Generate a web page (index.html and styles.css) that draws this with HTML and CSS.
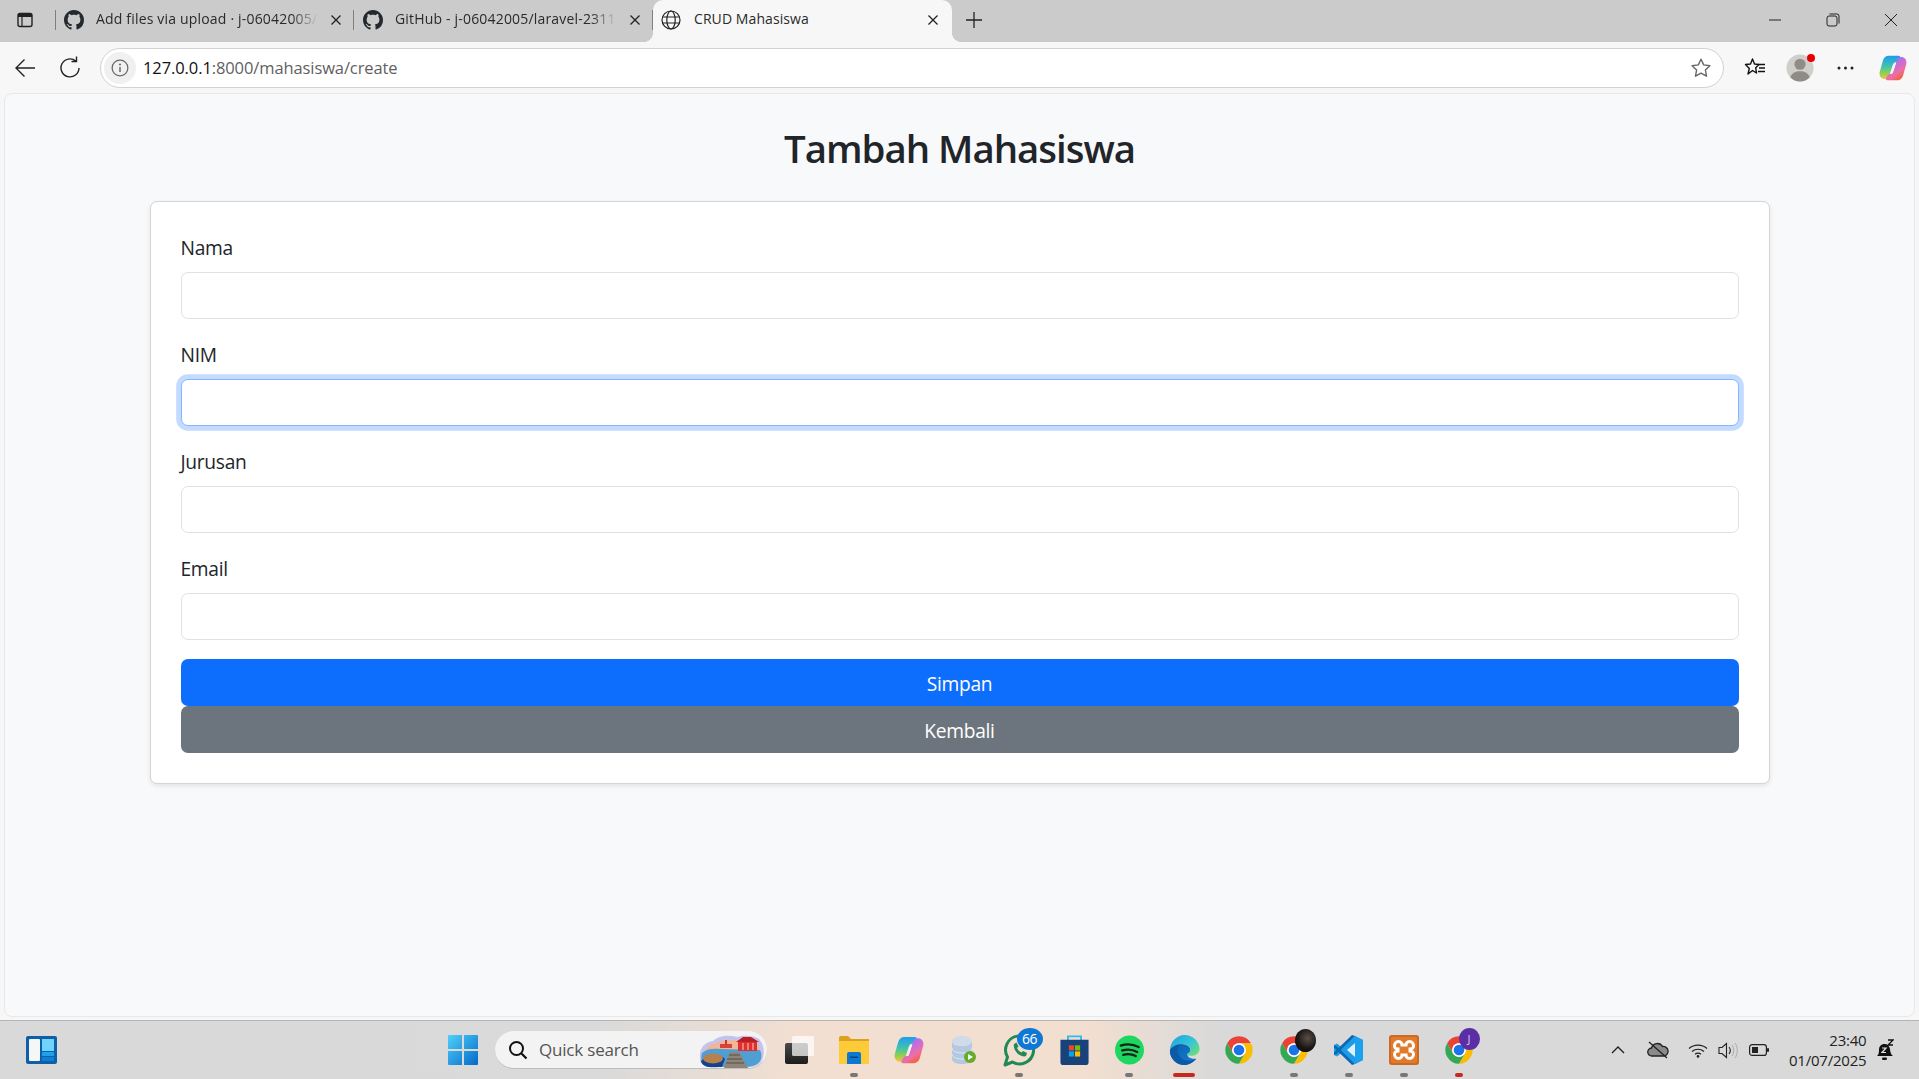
FILE: index.html
```
<!DOCTYPE html>
<html lang="id">
<head>
<meta charset="utf-8">
<title>CRUD Mahasiswa</title>
<link rel="stylesheet" href="styles.css">
</head>
<body>
<svg class="defs" width="0" height="0" aria-hidden="true">
  <symbol id="gh" viewBox="0 0 16 16"><path fill="#24292f" d="M8 0C3.58 0 0 3.58 0 8c0 3.54 2.29 6.53 5.47 7.59.4.07.55-.17.55-.38 0-.19-.01-.82-.01-1.49-2.01.37-2.53-.49-2.69-.94-.09-.23-.48-.94-.82-1.13-.28-.15-.68-.52-.01-.53.63-.01 1.08.58 1.23.82.72 1.21 1.87.87 2.33.66.07-.52.28-.87.51-1.07-1.78-.2-3.64-.89-3.64-3.95 0-.87.31-1.59.82-2.15-.08-.2-.36-1.02.08-2.12 0 0 .67-.21 2.2.82.64-.18 1.32-.27 2-.27s1.36.09 2 .27c1.53-1.04 2.2-.82 2.2-.82.44 1.1.16 1.92.08 2.12.51.56.82 1.27.82 2.15 0 3.07-1.87 3.75-3.65 3.95.29.25.54.73.54 1.48 0 1.07-.01 1.93-.01 2.2 0 .21.15.46.55.38A8.013 8.013 0 0 0 16 8c0-4.42-3.58-8-8-8z"/></symbol>
  <symbol id="x" viewBox="0 0 12 12"><path d="M1.500 1.500l9 9M10.500 1.500l-9 9" stroke="#222" stroke-width="1.300" fill="none"/></symbol>
  <symbol id="chrome" viewBox="0 0 48 48">
    <path fill="#ea4335" d="M24 2A22 22 0 0 0 5 13l9.500 16.500A11 11 0 0 1 24 13h19A22 22 0 0 0 24 2z"/>
    <path fill="#fbbc04" d="M43 13H24a11 11 0 0 1 9.500 16.500L24 46A22 22 0 0 0 43 13z"/>
    <path fill="#34a853" d="M5 13a22 22 0 0 0 19 33l9.500-16.500a11 11 0 0 1-19 0z"/>
    <circle cx="24" cy="24" r="11" fill="#fff"/><circle cx="24" cy="24" r="8.500" fill="#1a73e8"/>
  </symbol>
  <symbol id="copilot" viewBox="0 0 32 32">
    <defs>
      <linearGradient id="cpa" x1="0" y1="0" x2="0" y2="1"><stop offset="0" stop-color="#1f9cf0"/><stop offset=".45" stop-color="#3fc2b0"/><stop offset=".75" stop-color="#8fd04f"/><stop offset="1" stop-color="#f6c33c"/></linearGradient>
      <linearGradient id="cpb" x1="0" y1="0" x2=".6" y2="1"><stop offset="0" stop-color="#6b7df0"/><stop offset=".4" stop-color="#b66fe6"/><stop offset=".75" stop-color="#ef6ea6"/><stop offset="1" stop-color="#f2603f"/></linearGradient>
    </defs>
    <path fill="url(#cpa)" d="M11 2h11.500c1.500 0 2 1 1.500 2.500L21 9c-3 0-4.500 1-5.500 4l-3.500 11c-1 3-3 5-6 4.500C2 28 0 24.500.8 20.500L4.500 7.500C5.500 4 8 2 11 2z"/>
    <path fill="url(#cpb)" d="M21 30H9.500C8 30 7.500 29 8 27.500L11 23c3 0 4.500-1 5.500-4L20 8c1-3 3-5 6-4.500 4 .5 6 4 5.200 8l-3.700 13C26.500 28 24 30 21 30z"/>
    <path fill="#f6f2f2" d="M16.500 12.500c.500-1.500 1.500-2 3-2-.500 1.500-3 9.500-3.500 10.500-.500 1.200-1.500 1.500-2.500 1.500z"/>
  </symbol>
</svg>

<div class="screen">
  <header class="tabstrip">
    <div class="sidebar-btn">
      <svg width="18" height="18" viewBox="0 0 18 18"><rect x="2" y="2.500" width="14" height="13" rx="2" fill="none" stroke="#222" stroke-width="1.400"/><path d="M2 3.500a1 1 0 0 1 1-1h12a1 1 0 0 1 1 1V6H2z" fill="#222"/><path d="M6 6v9" stroke="#222" stroke-width="1.200"/></svg>
    </div>
    <div class="tab">
      <svg class="favicon" width="20" height="20"><use href="#gh"/></svg>
      <span class="tab-title">Add files via upload · j-06042005/</span>
      <svg class="tab-close" width="12" height="12"><use href="#x"/></svg>
    </div>
    <div class="tab">
      <svg class="favicon" width="20" height="20"><use href="#gh"/></svg>
      <span class="tab-title">GitHub - j-06042005/laravel-2311</span>
      <svg class="tab-close" width="12" height="12"><use href="#x"/></svg>
    </div>
    <div class="tab tab-active">
      <svg class="favicon" width="20" height="20" viewBox="0 0 20 20"><g fill="none" stroke="#222" stroke-width="1.200"><circle cx="10" cy="10" r="9"/><ellipse cx="10" cy="10" rx="4.200" ry="9"/><path d="M1.500 7h17M1.500 13h17"/></g></svg>
      <span class="tab-title">CRUD Mahasiswa</span>
      <svg class="tab-close" width="12" height="12"><use href="#x"/></svg>
    </div>
    <svg class="newtab" width="18" height="18" viewBox="0 0 18 18"><path d="M9 1v16M1 9h16" stroke="#222" stroke-width="1.300"/></svg>
    <div class="winctrls">
      <svg width="14" height="14" viewBox="0 0 14 14"><path d="M1 7h12" stroke="#222" stroke-width="1"/></svg>
      <svg width="14" height="14" viewBox="0 0 14 14"><rect x="1" y="3" width="10" height="10" rx="2" fill="none" stroke="#222"/><path d="M3.500 1h7.500a2 2 0 0 1 2 2v7.500" fill="none" stroke="#222"/></svg>
      <svg width="14" height="14" viewBox="0 0 14 14"><path d="M1 1l12 12M13 1L1 13" stroke="#222" stroke-width="1"/></svg>
    </div>
  </header>

  <nav class="toolbar">
    <svg class="tool-back" width="20" height="20" viewBox="0 0 20 20"><path d="M20 10H1M9.500 1.500L1 10l8.500 8.500" fill="none" stroke="#222" stroke-width="1.400"/></svg>
    <svg class="tool-reload" width="20" height="22" viewBox="0 0 20 22"><path d="M19 12a9 9 0 1 1-3.200-7M16.500 .5v5h-5" fill="none" stroke="#222" stroke-width="1.400"/></svg>
    <div class="omnibox">
      <span class="site-info"><svg width="18" height="18" viewBox="0 0 16 16"><circle cx="8" cy="8" r="7" fill="none" stroke="#666" stroke-width="1.100"/><path d="M8 7v4.500" stroke="#666" stroke-width="1.300"/><circle cx="8" cy="4.800" r=".9" fill="#666"/></svg></span>
      <span class="url"><span class="url-host">127.0.0.1</span>:8000/mahasiswa/create</span>
      <svg class="omni-star" width="22" height="22" viewBox="0 0 22 22"><path d="M11 2.200l2.700 5.700 6.200.8-4.500 4.300 1.100 6.200L11 16.200l-5.500 3 1.100-6.200L2.100 8.700l6.200-.8z" fill="none" stroke="#666" stroke-width="1.400" stroke-linejoin="round"/></svg>
    </div>
    <div class="tool-right">
      <span class="tool-slot"><svg width="22" height="22" viewBox="0 0 22 22"><path d="M8.500 2l2 5 4.500.5-3.300 3.200.8 5.300-4-2.500-4.500 3.500 1.300-5.500L1.500 7.500 6.500 7z" fill="none" stroke="#111" stroke-width="1.400" stroke-linejoin="round"/><path d="M15 7.500h6M15 11h6M14 14.500h7" stroke="#111" stroke-width="1.300"/></svg></span>
      <span class="tool-slot avatar-slot">
        <svg width="28" height="28" viewBox="0 0 30 30"><circle cx="15" cy="15" r="14.500" fill="#d0cecb"/><circle cx="15" cy="11" r="6" fill="#8f8c88"/><path d="M4.500 25c2-5 6-6.500 10.500-6.500S23.500 20 25.500 25a14.500 14.500 0 0 1-21 0z" fill="#8f8c88"/></svg>
        <i class="avatar-dot"></i>
      </span>
      <span class="tool-slot"><svg width="17" height="6" viewBox="0 0 17 6"><circle cx="2" cy="3" r="1.500" fill="#222"/><circle cx="8.500" cy="3" r="1.500" fill="#222"/><circle cx="15" cy="3" r="1.500" fill="#222"/></svg></span>
      <span class="tool-slot tool-slot-last"><svg width="28" height="28"><use href="#copilot"/></svg></span>
    </div>
  </nav>

  <main class="viewport">
    <h2 class="page-title">Tambah Mahasiswa</h2>
    <form class="card">
      <div class="field">
        <label class="field-label">Nama</label>
        <div class="input"></div>
      </div>
      <div class="field">
        <label class="field-label">NIM</label>
        <div class="input input-focus"></div>
      </div>
      <div class="field">
        <label class="field-label">Jurusan</label>
        <div class="input"></div>
      </div>
      <div class="field">
        <label class="field-label">Email</label>
        <div class="input"></div>
      </div>
      <div class="btn btn-primary">Simpan</div>
      <div class="btn btn-secondary">Kembali</div>
    </form>
  </main>

  <footer class="taskbar">
    <svg class="widgets" width="31" height="28" viewBox="0 0 31 28"><rect width="31" height="28" rx="2" fill="#0f5ea8"/><rect x="3" y="3" width="11" height="22" rx="1" fill="#f4f6f8"/><rect x="16" y="3" width="12" height="12" fill="#6fd3fb"/><rect x="16" y="16" width="12" height="4" fill="#1fa0ec"/><rect x="16" y="21" width="12" height="4" fill="#0c7fd8"/></svg>
    <svg class="start" width="30" height="30" viewBox="0 0 30 30"><defs><linearGradient id="win" x1="0" y1="0" x2="1" y2="1"><stop offset="0" stop-color="#4fd0fa"/><stop offset="1" stop-color="#0369c8"/></linearGradient></defs><path fill="url(#win)" d="M1 0h13v14H0V1a1 1 0 0 1 1-1zM16 0h13a1 1 0 0 1 1 1v13H16zM0 16h14v14H1a1 1 0 0 1-1-1zM16 16h14v13a1 1 0 0 1-1 1H16z"/></svg>
    <div class="search">
      <svg width="20" height="20" viewBox="0 0 20 20"><circle cx="8.500" cy="8.500" r="6.500" fill="none" stroke="#111" stroke-width="2"/><path d="M13.500 13.500l5 5" stroke="#111" stroke-width="2.200"/></svg>
      <span class="search-text">Quick search</span>
      <svg class="search-art" width="66" height="34" viewBox="0 0 66 34"><path d="M1 23C0 14 6 8 14 7 20 1 30 1 38 3c7-2 16-2 22 2 6 6 6 17 2 23-4 5-12 6-20 5H20c-8 1-15 0-18-4-1-2-1-4-1-6z" fill="#c6c3ea"/><path d="M8 13c8-6 26-8 36-6l16 5v5H8z" fill="#f2b697"/><path d="M3 19c4-4 10-5 18-4l40 1c3 6 1 12-3 14-4 3-12 3-18 3H20c-8 1-15 0-17-4-1-3-1-7 0-10z" fill="#4f9fd4"/><path d="M2 27c6-5 20-7 24-2l-3 8H12C7 33 3 31 2 27z" fill="#16418c"/><ellipse cx="14" cy="24.500" rx="10" ry="5" fill="#b5814f"/><rect x="39" y="7" width="19" height="10" fill="#df2f2e"/><path d="M37 8l7-5h8l8 5z" fill="#b91f24"/><path d="M44 9v7M49 9v7M54 9v7" stroke="#f6d0c6" stroke-width="1"/><rect x="21" y="10" width="12" height="4" fill="#d8443a"/><rect x="26" y="6" width="2" height="5" fill="#d8312c"/><path d="M31 18h9l9 16H25z" fill="#8f8478"/><path d="M30 21h11M28 25h15M27 29h18" stroke="#55504b" stroke-width="1.200"/></svg>
    </div>
    <div class="apps">
      <span class="app"><svg width="29" height="28" viewBox="0 0 29 28"><defs><linearGradient id="cb" x1="0" y1="0" x2="0" y2="1"><stop offset="0" stop-color="#4a4a4a"/><stop offset="1" stop-color="#1c1c1c"/></linearGradient></defs><rect x="0" y="7" width="23" height="21" rx="2" fill="url(#cb)"/><rect x="7" y="0" width="22" height="20" rx="1.500" fill="#fff" fill-opacity=".72"/></svg></span>
      <span class="app">
        <svg width="30" height="28" viewBox="0 0 30 28"><path d="M0 2a2 2 0 0 1 2-2h7l3 3h18v3H0z" fill="#dca21c"/><path d="M0 5h30v22a1 1 0 0 1-1 1H1a1 1 0 0 1-1-1z" fill="#fdcb3a"/><path d="M8 18a2 2 0 0 1 2-2h10a2 2 0 0 1 2 2v10H8z" fill="#0d78d2"/><path d="M11 20.500h8v1.500h-8z" fill="#06437f"/></svg>
        <i class="run"></i>
      </span>
      <span class="app"><svg width="30" height="30"><use href="#copilot"/></svg></span>
      <span class="app"><svg width="24" height="28" viewBox="0 0 24 28"><ellipse cx="10" cy="5" rx="10" ry="5" fill="#cfdaea"/><path d="M0 5v18c0 3 4 5 10 5s10-2 10-5V5c0 3-4 5-10 5S0 8 0 5z" fill="#b5c8e2"/><path d="M0 12c0 3 4 5 10 5s10-2 10-5M0 18c0 3 4 5 10 5s10-2 10-5" fill="none" stroke="#dfe7f0" stroke-width="1"/><circle cx="18" cy="21" r="6" fill="#63ad2a"/><path d="M16 18l5 3-5 3z" fill="#fff"/></svg></span>
      <span class="app">
        <svg width="32" height="34" viewBox="0 0 32 34"><path d="M2 32l2.500-8a14 14 0 1 1 5 5z" fill="none" stroke="#1f8a55" stroke-width="3" stroke-linejoin="round"/><path d="M11 11c-1 3 1 7 4 10 3 2 6 3 8 2l1-3-4-2-1.500 1.500c-2-1-3.500-2.500-4.500-4.500l1.500-1.500-2-4z" fill="#1f8a55"/></svg>
        <b class="badge badge-blue">66</b>
        <i class="run"></i>
      </span>
      <span class="app"><svg width="29" height="30" viewBox="0 0 30 32"><path d="M8 6V1.500h14V6" fill="none" stroke="#2bbdf0" stroke-width="2"/><path d="M0 5h30v24a3 3 0 0 1-3 3H3a3 3 0 0 1-3-3z" fill="#17427a"/><rect x="9" y="11" width="5.500" height="5.500" fill="#e8492d"/><rect x="15.500" y="11" width="5.500" height="5.500" fill="#7fb900"/><rect x="9" y="17.500" width="5.500" height="5.500" fill="#00a4ef"/><rect x="15.500" y="17.500" width="5.500" height="5.500" fill="#ffb900"/></svg></span>
      <span class="app">
        <svg width="29" height="30" viewBox="0 0 30 30"><circle cx="15" cy="15" r="15" fill="#1ed760"/><path d="M6 10.500c6-2 13-1.500 18.500 1.500M7.500 15.500c5-1.500 11-1 15.500 1.500M8.500 20c4-1 9-.8 13 1.200" fill="none" stroke="#17231b" stroke-width="2.400" stroke-linecap="round"/></svg>
        <i class="run"></i>
      </span>
      <span class="app">
        <svg width="31" height="32" viewBox="0 0 32 32"><defs><linearGradient id="edg" x1="0" y1="0" x2="1" y2=".8"><stop offset="0" stop-color="#1f9fdc"/><stop offset=".6" stop-color="#35c6d8"/><stop offset="1" stop-color="#6bdc78"/></linearGradient><linearGradient id="edb" x1="0" y1="0" x2="1" y2="1"><stop offset="0" stop-color="#0d5da8"/><stop offset="1" stop-color="#1180d8"/></linearGradient></defs><path d="M5 12c5-3 13-3 16 1 2 3 1 6-2 7 0 4 4 5 9 5-4 5-9 6.500-12 6.500C8 31.500 1 25 1 17 1 15 3 13 5 12z" fill="url(#edb)"/><path d="M12 10c-3 2-4 6-2 11 3 6 10 8 18 4-3 4-8 6.500-12 6.500C8 31.500 1 25 1 17c0-5 6-9 11-7z" fill="#0c5aa6"/><path d="M16 .5c9 0 15.500 7 15.500 14.500 0 5-4.500 7-8.500 7-3 0-4-1-4-2 3-1 4-4 2-7-3-4-11-4-16-1-2 1-3 2-4 4C1 8 8 .5 16 .5z" fill="url(#edg)"/></svg>
        <i class="run run-wide"></i>
      </span>
      <span class="app"><svg width="30" height="30"><use href="#chrome"/></svg></span>
      <span class="app">
        <svg width="30" height="30"><use href="#chrome"/></svg>
        <i class="badge badge-photo"></i>
        <i class="run"></i>
      </span>
      <span class="app">
        <svg width="30" height="30" viewBox="0 0 30 30"><path d="M21 1l8 4v20l-8 4L8 17.500 3 21.500 0 20V10l3-1.500 5 4z" fill="#1d9be6"/><path d="M21 8l-8 7 8 7z" fill="#dff1fc"/><path d="M21 1l8 4v20l-8 4z" fill="#1ba1ee"/><path d="M21 1L3 18.500 0 20v-2.500L18 0z" fill="#0a69b5"/><path d="M21 29L3 11.500 0 10v2.500L18 30z" fill="#0a69b5"/></svg>
        <i class="run"></i>
      </span>
      <span class="app">
        <svg width="30" height="30" viewBox="0 0 30 30"><rect width="30" height="30" rx="2.500" fill="#e27a2c"/><rect x="1" y="1" width="28" height="28" rx="2" fill="none" stroke="#b9591a"/><path d="M9.500 6.500c2.500 0 3.500 2 3.500 3.500h4c0-1.500 1-3.500 3.500-3.500S24.500 9 24.500 11s-2 3-3.500 3v2c1.500 0 3.500 1 3.500 3s-1.500 4.500-4 4.500S17 21.500 17 20h-4c0 1.500-1 3.500-3.500 3.500s-4-2.500-4-4.500 2-3 3.500-3v-2c-1.500 0-3.500-1-3.500-3s1.500-4.500 4-4.500z" fill="none" stroke="#fff" stroke-width="3"/></svg>
        <i class="run"></i>
      </span>
      <span class="app">
        <svg width="30" height="30"><use href="#chrome"/></svg>
        <b class="badge badge-purple">J</b>
        <i class="run run-red"></i>
      </span>
    </div>
    <div class="tray">
      <svg class="tray-caret" width="14" height="8" viewBox="0 0 14 8"><path d="M1 7l6-6 6 6" fill="none" stroke="#222" stroke-width="1.400"/></svg>
      <svg class="tray-cloud" width="22" height="18" viewBox="0 0 22 18"><path d="M5 15a4 4 0 0 1-.5-8 6 6 0 0 1 11-1.500 4.800 4.800 0 0 1 1.500 9.500z" fill="#8a8a8a" stroke="#222" stroke-width="1.300"/><path d="M2 1l18 16" stroke="#222" stroke-width="1.400"/></svg>
      <svg class="tray-wifi" width="20" height="15" viewBox="0 0 20 15"><path d="M1 5.500c5-4.500 13-4.500 18 0M4 8.500c3.500-3 8.500-3 12 0M7 11.200c1.800-1.400 4.200-1.400 6 0" fill="none" stroke="#222" stroke-width="1.200"/><circle cx="10" cy="13.400" r="1.300" fill="#222"/></svg>
      <svg class="tray-vol" width="20" height="17" viewBox="0 0 20 17"><path d="M1 5.500h3L8.500 1.500v14L4 11.500H1z" fill="none" stroke="#222" stroke-width="1.100"/><path d="M11 5c1.500 2 1.500 5 0 7" fill="none" stroke="#222" stroke-width="1.100"/><path d="M14 3c2.300 3 2.300 8 0 11M17 1c3 4 3 11 0 15" fill="none" stroke="#aaa" stroke-width="1"/></svg>
      <svg class="tray-bat" width="20" height="12" viewBox="0 0 20 12"><rect x=".6" y=".6" width="16.800" height="10.800" rx="2.500" fill="none" stroke="#222" stroke-width="1.200"/><rect x="3" y="3" width="6" height="6" fill="#222"/><rect x="18" y="4" width="2" height="4" rx="1" fill="#222"/></svg>
      <div class="clock"><span>23:40</span><span>01/07/2025</span></div>
      <svg class="tray-bell" width="18" height="22" viewBox="0 0 18 22"><path d="M1 17c1.500-1 2-3 2-6 0-3.500 2-6 5.500-6 3 0 5 2 5.500 5 .3 3 .8 5.500 3 7z" fill="#111"/><rect x="6" y="18.500" width="5" height="2.500" rx="1.200" fill="#111"/><path d="M6 9h4l-4 4.500h4" fill="none" stroke="#e4e4e4" stroke-width="1.200"/><path d="M12 1h5l-5 5h5" fill="none" stroke="#111" stroke-width="1.300"/></svg>
    </div>
  </footer>
</div>
</body>
</html>
```

FILE: styles.css
```
* { box-sizing: border-box; }
html, body { margin: 0; padding: 0; height: 100%; overflow: hidden; }
body { font-family: "Open Sans", "Noto Sans", sans-serif; color: #212529; background: #f7f7f7; }
.defs { position: absolute; }
svg { display: block; flex: none; }

.screen { width: 1919px; height: 1079px; display: flex; flex-direction: column; }

/* tab strip */
.tabstrip { height: 42px; flex: none; background: #cbcbcb; display: flex; align-items: center; padding-bottom: 2px; }
.sidebar-btn { width: 56px; height: 20px; padding-left: 16px; display: flex; align-items: center; border-right: 1px solid #7f7f7f; }
.tab { width: 298px; height: 20px; display: flex; align-items: center; padding-left: 8px; position: relative; border-right: 1px solid #7f7f7f; }
.tab + .tab { width: 299px; padding-left: 9px; }
.tab-title { font-size: 14px; line-height: 18px; letter-spacing: .18px; padding-bottom: 2px; color: #2a2a2a; width: 222px; margin-left: 12px; white-space: nowrap; -webkit-mask-image: linear-gradient(90deg, #000 88%, transparent 100%); mask-image: linear-gradient(90deg, #000 88%, transparent 100%); }
.tab-close { margin-left: 12px; }
.tab + .tab.tab-active { width: 299px; height: 42px; margin-bottom: -2px; padding: 0 0 2px 8px; background: #f7f7f7; border: 0; border-radius: 10px 10px 0 0; }
.tab-active::before, .tab-active::after { content: ""; position: absolute; bottom: 0; width: 10px; height: 10px; }
.tab-active::before { left: -10px; background: radial-gradient(circle at 0 0, #cbcbcb 10px, #f7f7f7 10.500px); }
.tab-active::after { right: -10px; background: radial-gradient(circle at 100% 0, #cbcbcb 10px, #f7f7f7 10.500px); }
.tab-active .tab-title { margin-left: 13px; width: 233px; letter-spacing: .08px; -webkit-mask-image: none; mask-image: none; }
.tab-active .tab-close { margin-left: 0; }
.newtab { margin-left: 13px; }
.winctrls { margin-left: auto; width: 174px; padding: 0 21px 0 23px; display: flex; justify-content: space-between; }

/* toolbar */
.toolbar { height: 51px; flex: none; background: #f7f7f7; display: flex; align-items: flex-start; padding-top: 6px; }
.tool-back { margin: 10px 0 0 15px; }
.tool-reload { margin: 8px 0 0 25px; }
.omnibox { width: 1624px; height: 40px; margin-left: 20px; background: #fff; border: 1px solid #d2d2d2; border-radius: 20px; display: flex; align-items: center; padding-left: 3px; }
.site-info { width: 32px; height: 32px; border-radius: 50%; background: #f0f0f0; display: flex; align-items: center; justify-content: center; margin-right: 7px; }
.url { font-size: 16.500px; letter-spacing: -.1px; color: #5f5f5f; padding-bottom: 2px; }
.url-host { color: #111; }
.omni-star { margin-left: auto; margin-right: 11px; }
.tool-right { display: flex; margin-left: 8.500px; }
.tool-slot { width: 45px; height: 40px; display: flex; align-items: center; justify-content: center; position: relative; }
.tool-slot-last { width: 50px; }
.avatar-dot { position: absolute; top: 6px; right: 8px; width: 8px; height: 8px; border-radius: 50%; background: #e60000; }

/* page */
.viewport { flex: none; height: 924px; margin: 0 4px; background: #f8f9fa; border: 1px solid #e8e8e8; border-radius: 8px; padding-top: 31px; }
.page-title { margin: 0 0 30px; text-align: center; font-size: 38.400px; line-height: 46px; font-weight: 600; letter-spacing: -1px; color: #212529; }
.card { width: 1620px; margin: 0 auto; padding: 29px 30px 30px; background: #fff; border: 1px solid #d4d4d4; border-radius: 7px; box-shadow: 0 2px 5px rgba(0,0,0,.09); }
.field { margin-bottom: 19.200px; }
.field-label { display: block; height: 31.800px; line-height: 32px; margin-bottom: 9.600px; font-size: 19.200px; letter-spacing: -.3px; padding-top: 1px; color: #212529; }
.input { height: 46.400px; background: #fff; border: 1px solid #dee2e6; border-radius: 7px; }
.input-focus { border-color: #86b7fe; box-shadow: 0 0 0 4.800px rgba(13,110,253,.25); }
.btn { height: 47px; line-height: 49px; text-align: center; color: #fff; font-size: 19.200px; letter-spacing: -.3px; border-radius: 7px; }
.btn-primary { background: #0d6efd; margin-top: 2.500px; }
.btn-secondary { background: #6c757d; }

/* taskbar */
.taskbar { flex: none; height: 59px; margin-top: 3px; border-top: 1px solid #b5b5b5; background: linear-gradient(90deg, #d9d9d9 0, #dadada 600px, #f2dfd1 800px, #f3dfd0 1080px, #d9d9d9 1220px, #d9d9d9 100%); display: flex; align-items: center; }
.widgets { margin-left: 26px; }
.start { margin-left: 391px; }
.search { width: 272px; height: 38px; margin-left: 17px; border-radius: 19px; background: #f3f3f3; border-bottom: 1px solid #bdbdbd; display: flex; align-items: center; padding-left: 13px; position: relative; }
.search-text { font-size: 17px; letter-spacing: -.2px; color: #555; margin-left: 11px; }
.search-art { position: absolute; right: 2px; top: 3px; }
.apps { display: flex; margin-left: 4.500px; }
.app { width: 55px; height: 58px; display: flex; align-items: center; justify-content: center; position: relative; }
.run { position: absolute; bottom: 2px; left: 50%; width: 8px; height: 4px; margin-left: -4px; border-radius: 2px; background: #777; }
.run-wide { width: 22px; margin-left: -11px; background: #c42b1c; }
.run-red { background: #c42b1c; }
.badge { position: absolute; display: block; border-radius: 50%; text-align: center; font-style: normal; font-weight: 400; color: #fff; }
.badge-blue { top: 7px; left: 25px; width: 26px; height: 22px; background: #0f78d4; font-size: 14px; line-height: 22px; letter-spacing: -.4px; }
.badge-photo { top: 8px; left: 28px; width: 21px; height: 23px; background: radial-gradient(circle at 60% 40%, #5c4f48 0, #1a1614 55%, #050505 100%); }
.badge-purple { top: 7px; left: 27px; width: 21px; height: 22px; background: #5b2ea6; font-size: 11px; line-height: 22px; color: #d8c8f5; }
.tray { flex: 1; display: flex; align-items: center; position: relative; }
.tray-caret { margin-left: 124px; }
.tray-cloud { margin-left: 22px; }
.tray-wifi { margin-left: 19px; }
.tray-vol { margin-left: 10px; }
.tray-bat { margin-left: 11px; }
.clock { width: 90px; margin-left: 8px; display: flex; flex-direction: column; align-items: flex-end; font-size: 15px; line-height: 20px; letter-spacing: -.2px; color: #222; }
.tray-bell { margin-left: 9px; }
```
